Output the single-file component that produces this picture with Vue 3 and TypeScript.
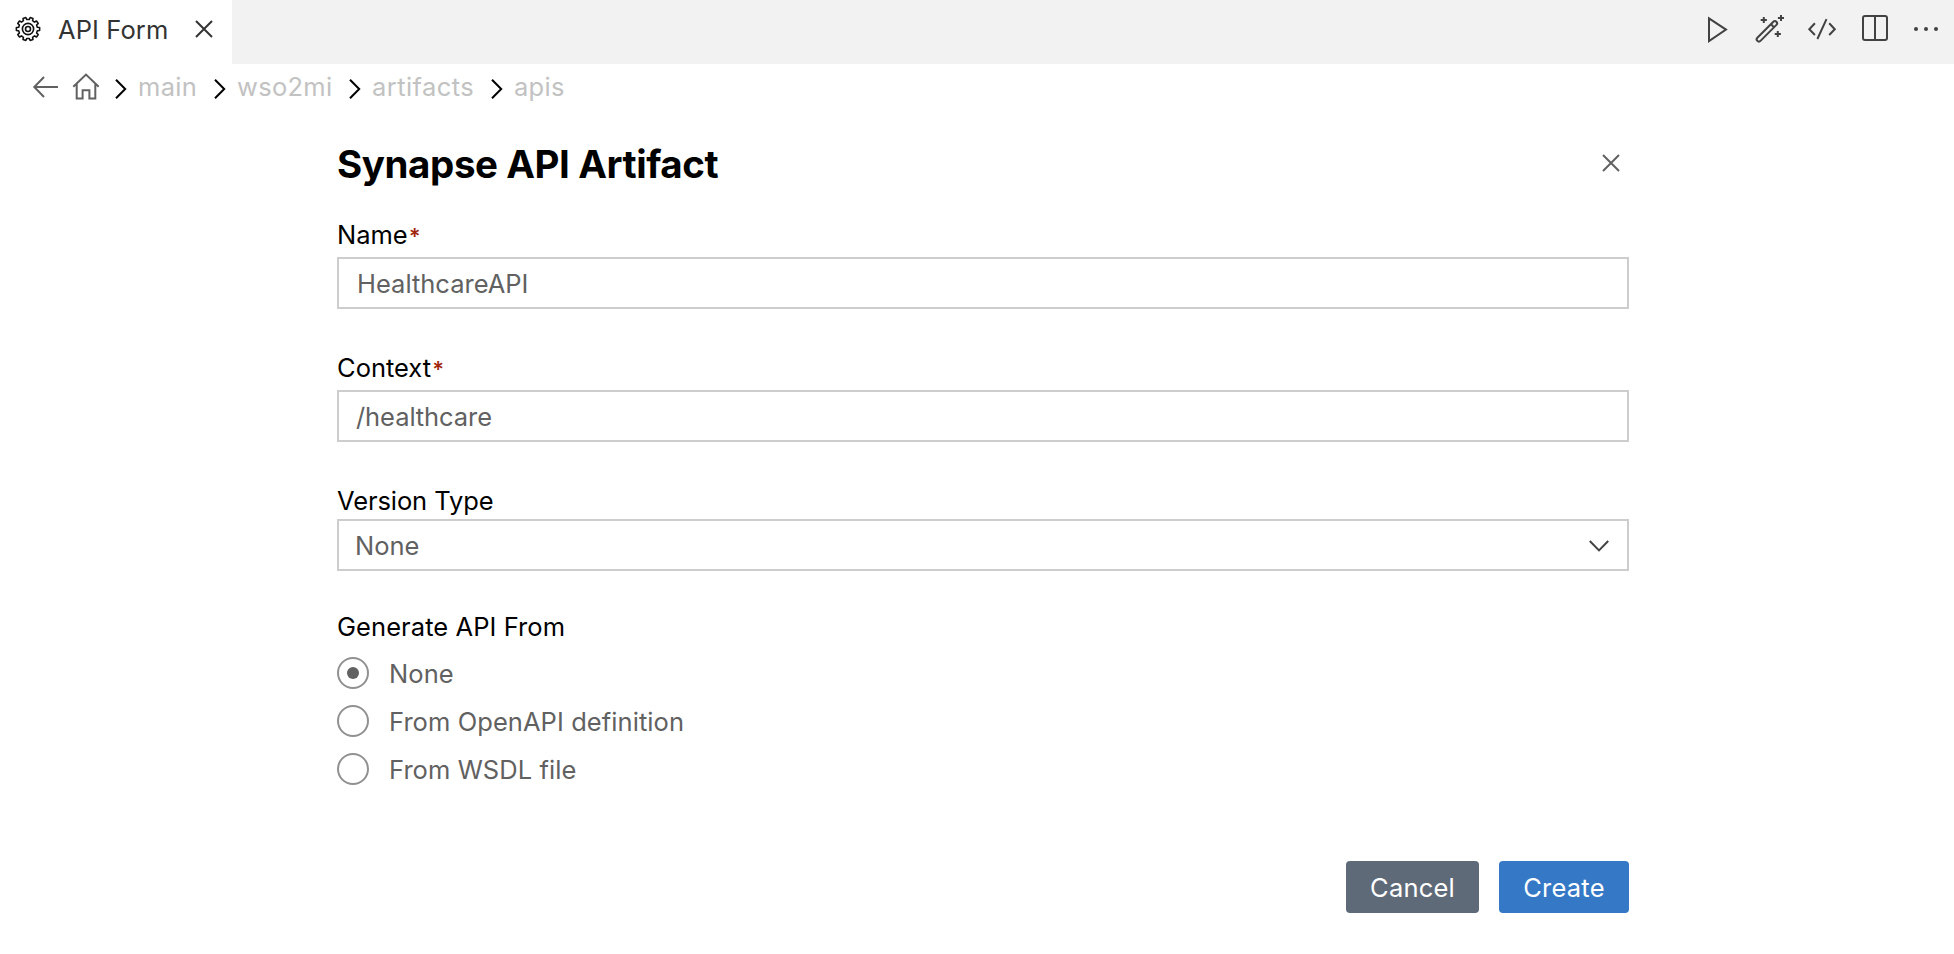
<script setup lang="ts">
import { ref } from 'vue'

interface Option {
  id: string
  label: string
}

const crumbs: string[] = ['main', 'wso2mi', 'artifacts', 'apis']
const sources: Option[] = [
  { id: 'none', label: 'None' },
  { id: 'openapi', label: 'From OpenAPI definition' },
  { id: 'wsdl', label: 'From WSDL file' },
]

const name = ref('HealthcareAPI')
const context = ref('/healthcare')
const versionType = ref('None')
const source = ref('none')

// Outline of a cog with evenly spaced teeth around the centre of a 26px box.
function cogPath(teeth: number, outer: number, inner: number): string {
  const step = (Math.PI * 2) / teeth
  const point = (r: number, a: number) =>
    `${(13 + r * Math.sin(a)).toFixed(2)} ${(13 - r * Math.cos(a)).toFixed(2)}`
  const parts: string[] = []
  for (let i = 0; i < teeth; i++) {
    const a = i * step + step / 2
    parts.push(point(inner, a - step * 0.3), point(outer, a - step * 0.2))
    parts.push(point(outer, a + step * 0.2), point(inner, a + step * 0.3))
  }
  return `M${parts.join('L')}Z`
}
const cog = cogPath(10, 11.7, 9.5)
</script>

<template>
  <div class="window">
    <header class="tabbar">
      <div class="tab">
        <svg class="cog" width="26" height="26" viewBox="0 0 26 26">
          <path :d="cog" />
          <circle cx="13" cy="13" r="5.6" />
          <circle cx="13" cy="13" r="2.5" />
        </svg>
        <span class="tab-title">API Form</span>
        <svg class="tab-close" width="18" height="18" viewBox="0 0 18 18">
          <path d="M1 1L17 17M17 1L1 17" />
        </svg>
      </div>
      <div class="tools">
        <svg width="28" height="28" viewBox="0 0 28 28">
          <path d="M5 4.4L22 15.6L5 27.2Z" />
        </svg>
        <svg width="28" height="28" viewBox="0 0 28 28">
          <rect x="-2.6" y="15.1" width="27" height="4.4" rx="2.2" transform="rotate(-45 10.9 17.3)" />
          <path d="M15 10.2L18 13.2" />
          <path d="M7.8 2.9V9M4.7 6H10.9M25 .9V7M21.9 4H28M21.8 16.9V23M18.7 20H24.9" />
        </svg>
        <svg width="28" height="28" viewBox="0 0 28 28">
          <path d="M6.9 9.2L1.3 15.3L6.9 21M21.2 9.2L26.8 15.3L21.2 21M18.5 5.2L9.4 25" />
        </svg>
        <svg width="28" height="28" viewBox="0 0 28 28">
          <rect x="3" y="2" width="24" height="24" rx="2" />
          <path d="M15 2V26" />
        </svg>
        <svg width="28" height="28" viewBox="0 0 28 28">
          <g class="dots">
            <circle cx="4" cy="15" r="2" />
            <circle cx="14" cy="15" r="2" />
            <circle cx="24" cy="15" r="2" />
          </g>
        </svg>
      </div>
    </header>

    <nav class="crumbs">
      <svg class="back" width="26" height="22" viewBox="0 0 26 22">
        <path d="M11 1L1.3 11L11 21M1.3 11H25" />
      </svg>
      <svg class="home" width="28" height="28" viewBox="0 0 28 28">
        <path d="M1.3 13.7L14 1.6L26.7 13.7M4.7 11V25.6H10.6V17.3H17.4V25.6H23.3V11" />
      </svg>
      <template v-for="crumb in crumbs" :key="crumb">
        <svg class="sep" width="12" height="20" viewBox="0 0 12 20">
          <path d="M1 .8L10.2 10L1 19.2" />
        </svg>
        <span :class="['crumb', crumb]">{{ crumb }}</span>
      </template>
    </nav>

    <main class="form">
      <div class="head">
        <h1>Synapse API Artifact</h1>
        <svg width="18" height="18" viewBox="0 0 18 18">
          <path d="M1 1L17 17M17 1L1 17" />
        </svg>
      </div>

      <section class="field">
        <label><span>Name</span><b>*</b></label>
        <div class="box"><span>{{ name }}</span></div>
      </section>
      <section class="field">
        <label><span>Context</span><b>*</b></label>
        <div class="box"><span class="context-value">{{ context }}</span></div>
      </section>
      <section class="field version">
        <label><span>Version Type</span></label>
        <div class="box select">
          <span>{{ versionType }}</span>
          <svg width="22" height="14" viewBox="0 0 22 14">
            <path d="M1.8 2L11 11.4L20.2 2" />
          </svg>
        </div>
      </section>

      <section class="sources">
        <div class="legend"><span>Generate API From</span></div>
        <div v-for="s in sources" :key="s.id" class="option" @click="source = s.id">
          <i :class="['radio', { on: s.id === source }]"></i>
          <span :class="s.id">{{ s.label }}</span>
        </div>
      </section>

      <footer class="actions">
        <button class="cancel"><span>Cancel</span></button>
        <button class="create"><span>Create</span></button>
      </footer>
    </main>
  </div>
</template>

<style>
body {
  margin: 0;
  background: #fff;
}
</style>

<style scoped>
.window {
  width: 1954px;
  height: 954px;
  overflow: hidden;
  background: #fff;
  color: #616161;
  font: 25.5px/32px Inter, Roboto, "Liberation Sans", sans-serif;
  white-space: nowrap;
}
svg {
  display: block;
  flex: none;
  overflow: visible;
  fill: none;
  stroke: #424242;
  stroke-width: 2;
}
.tabbar {
  display: flex;
  justify-content: space-between;
  height: 64px;
  background: #f2f2f2;
}
.tab {
  display: flex;
  align-items: center;
  box-sizing: border-box;
  width: 232px;
  padding: 0 19px 6px 15px;
  background: #fff;
}
.cog {
  stroke: #111;
  stroke-width: 1.6;
  stroke-linejoin: round;
}
.tab-title {
  width: 137px;
  margin-left: 17px;
  padding-top: 1px;
  color: #333;
  letter-spacing: 0.1px;
}
.tab-close {
  stroke: #333;
}
.tools {
  display: flex;
  gap: 24px;
  padding: 14px 14px 0 0;
}
.dots {
  fill: #424242;
  stroke: none;
}
.crumbs {
  display: flex;
  align-items: center;
  height: 46px;
  padding-left: 33px;
  color: #c2c2c2;
}
.back,
.home {
  stroke: #616161;
}
.home {
  margin-left: 13px;
}
.sep {
  margin: 4px 11px 0 15px;
  stroke: #000;
}
.crumb {
  letter-spacing: 0.3px;
}
.crumb.main {
  width: 61px;
}
.crumb.wso2mi {
  width: 97px;
}
.crumb.artifacts {
  width: 104px;
  letter-spacing: 0.42px;
}
.form {
  width: 1292px;
  margin-left: 337px;
}
.head {
  display: flex;
  align-items: center;
  justify-content: space-between;
  height: 107px;
  padding-right: 9px;
}
.head svg {
  margin-bottom: 1px;
  stroke: #616161;
}
h1 {
  margin: 0;
  color: #000;
  font-size: 38.5px;
  font-weight: 700;
  line-height: 48px;
  letter-spacing: -0.42px;
}
.field {
  height: 133px;
}
label {
  display: block;
  height: 32px;
  padding: 2px 0 6px;
  color: #000;
}
label b {
  margin-left: 1px;
  color: #a1260d;
  font-size: 22px;
  font-weight: 600;
  line-height: 1;
}
.box {
  display: flex;
  align-items: center;
  box-sizing: border-box;
  height: 52px;
  padding: 2px 18px 0;
  border: 2px solid #cdcdcd;
}
.context-value {
  margin-left: -1px;
  letter-spacing: -0.08px;
}
.version {
  height: 128px;
}
.version label {
  padding-bottom: 2px;
  letter-spacing: -0.1px;
}
.select {
  justify-content: space-between;
  padding: 2px 17px 0 16px;
}
.legend {
  height: 38px;
  color: #000;
  letter-spacing: 0.07px;
}
.option {
  display: flex;
  align-items: center;
  gap: 20px;
  height: 48px;
}
.option span {
  padding-top: 1px;
  letter-spacing: 0.07px;
}
.radio {
  display: grid;
  place-items: center;
  box-sizing: border-box;
  width: 32px;
  height: 32px;
  border: 2px solid #919191;
  border-radius: 50%;
}
.radio.on::after {
  content: "";
  width: 12px;
  height: 12px;
  border-radius: 50%;
  background: #616161;
}
.actions {
  display: flex;
  justify-content: flex-end;
  gap: 20px;
  margin-top: 68px;
}
button {
  height: 52px;
  padding: 1px 0 0;
  border: 0;
  border-radius: 4px;
  color: #fff;
  font: inherit;
  letter-spacing: 0.2px;
}
.cancel {
  width: 133px;
  background: #5f6a79;
}
.create {
  width: 130px;
  background: #3478c6;
}
</style>
